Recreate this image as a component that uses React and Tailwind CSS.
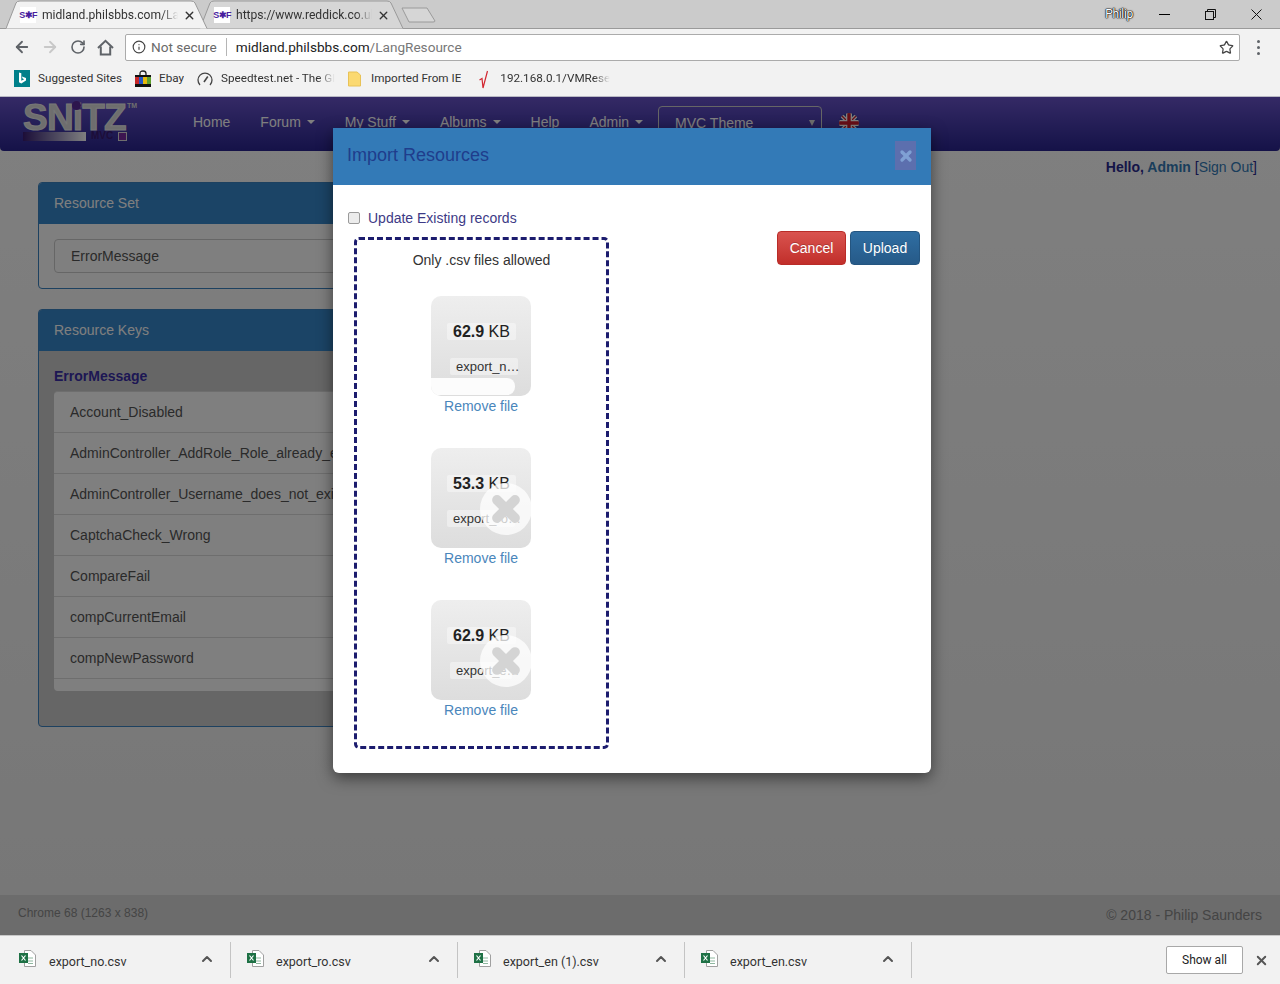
import React from 'react';
import { ArrowLeft, ArrowRight, RotateCw, Info, Star, ChevronUp, X } from 'lucide-react';

const chromeFont = "font-['Roboto',sans-serif]";
const pageFont = "font-['Liberation_Sans',Arial,sans-serif]";

const Favicon = () => (
  <span className="flex h-[16px] w-[16px] shrink-0 items-center justify-center bg-white text-[9px] font-bold leading-none tracking-[-0.6px] text-[#4a1f9e] font-['Liberation_Sans',sans-serif]">
    S✱F
  </span>
);

const TabShape = ({ fill, width }) => (
  <svg className="absolute left-0 top-0" width={width} height="29" viewBox={`0 0 ${width} 29`}>
    <path
      d={`M0 28.5 L10 3 Q11 1 14 1 L${width - 17} 1 Q${width - 14} 1 ${width - 13} 3 L${width - 1} 28.5`}
      fill={fill}
      stroke="#9a9a9a"
      strokeWidth="1"
    />
  </svg>
);

const Tab = ({ title, active, width, className }) => (
  <div className={`relative h-[29px] shrink-0 ${className}`} style={{ width }}>
    <TabShape fill={active ? '#f2f2f2' : '#d6d6d6'} width={width} />
    <div className="relative flex h-[29px] items-center pt-[1px] pl-[14px]">
      <Favicon />
      <span className="ml-[6px] w-[136px] overflow-hidden whitespace-nowrap text-[12.1px] text-[#333] [mask-image:linear-gradient(to_right,black_88%,transparent)]">
        {title}
      </span>
      <X size={13} strokeWidth={2.5} className="ml-[5px] text-[#333]" />
    </div>
  </div>
);

const HomeIcon = () => (
  <svg width="17" height="17" viewBox="0 0 17 17" fill="none" stroke="#5f6368" strokeWidth="2">
    <path d="M1 9 L8.5 1.8 L16 9" />
    <path d="M3.8 7.5 V15.5 H13.2 V7.5" />
  </svg>
);

const BingIcon = () => (
  <svg width="16" height="17" viewBox="0 0 16 17">
    <rect width="16" height="17" fill="#00808a" />
    <path d="M5 2.5 L7.3 3.3 V10.8 L10.2 9.2 L8.6 8.4 L7.9 6.6 L12 8 V10.4 L7.3 13.4 L5 12.2 Z" fill="#fff" />
  </svg>
);

const BagIcon = () => (
  <svg width="16" height="17" viewBox="0 0 16 17">
    <path d="M5 6 V3.5 Q5 1 8 1 Q11 1 11 3.5 V6" fill="none" stroke="#222" strokeWidth="1.3" />
    <rect y="5" width="16" height="2" fill="#111" />
    <rect y="7" width="4" height="8" fill="#c62828" />
    <rect x="4" y="7" width="4" height="8" fill="#2456c8" />
    <rect x="8" y="7" width="4" height="8" fill="#e5b90c" />
    <rect x="12" y="7" width="4" height="8" fill="#5fa02e" />
    <rect y="14" width="16" height="3" fill="#111" />
  </svg>
);

const GaugeIcon = () => (
  <svg width="16" height="16" viewBox="0 0 16 16" fill="none" stroke="#444" strokeWidth="1.3">
    <path d="M3 14 A7 7 0 1 1 13 14" />
    <path d="M7 11 L10.8 5.5" strokeWidth="1.6" />
  </svg>
);

const FolderIcon = () => (
  <svg width="13" height="16" viewBox="0 0 13 16">
    <path d="M0.5 1 H9 L12.5 4 V15 H0.5 Z" fill="#fbd971" stroke="#e8c257" />
  </svg>
);

const CheckMark = () => (
  <svg width="9" height="19" viewBox="0 0 9 19" fill="none" stroke="#d22630" strokeWidth="1.2">
    <path d="M0.5 10 L3 8.5 L4 18 L8.5 1" />
  </svg>
);

const Bookmark = ({ icon, label, iconLeft, textLeft, width, fade }) => (
  <div className="flex shrink-0 items-center" style={{ marginLeft: iconLeft }}>
    <span className="flex w-[16px] justify-center">{icon}</span>
    <span
      className={`overflow-hidden whitespace-nowrap text-[11.7px] text-[#333] ${fade ? '[mask-image:linear-gradient(to_right,black_85%,transparent)]' : ''}`}
      style={{ marginLeft: textLeft, width }}
    >
      {label}
    </span>
  </div>
);

const ChromeBar = () => (
  <div className={`shrink-0 ${chromeFont}`}>
    <div className="relative flex h-[29px] items-start bg-[#cbcbcb] border-b border-[#9a9a9a]">
      <div className="flex pl-[6px]">
        <Tab title="midland.philsbbs.com/LangResource" active width={202} className="z-10" />
        <Tab title="https://www.reddick.co.uk/" width={204} className="-ml-[8px]" />
        <svg className="-ml-[3px] mt-[7px]" width="36" height="16" viewBox="0 0 36 16" fill="#d6d6d6" stroke="#9a9a9a">
          <path d="M1 1 H26 L34 14 Q34 15 32 15 H8 Z" />
        </svg>
      </div>
      <div className="ml-auto flex items-center pt-[5px]">
        <span className="mr-[26px] text-[12px] tracking-[-0.3px] text-white [text-shadow:0_0_1px_#000,0_0_1px_#000,0_0_1px_#000,0_0_2px_#222]">Philip</span>
        <span className="mr-[35px] h-[1px] w-[11px] bg-black" />
        <svg className="mr-[35px]" width="11" height="11" viewBox="0 0 11 11" fill="none" stroke="#111">
          <rect x="0.5" y="2.5" width="8" height="8" fill="#cbcbcb" />
          <path d="M2.5 2.5 V0.5 H10.5 V8.5 H8.5" />
        </svg>
        <svg className="mr-[18px]" width="11" height="11" viewBox="0 0 11 11" stroke="#111">
          <path d="M0.5 0.5 L10.5 10.5 M10.5 0.5 L0.5 10.5" />
        </svg>
      </div>
    </div>

    <div className="flex h-[35px] items-center bg-[#f2f2f2] pt-[1px]">
      <ArrowLeft size={18} strokeWidth={2.4} className="ml-[13px] text-[#5f6368]" />
      <ArrowRight size={18} strokeWidth={2.4} className="ml-[10px] text-[#c8c8c8]" />
      <RotateCw size={16} strokeWidth={2.4} className="ml-[11px] text-[#5f6368]" />
      <span className="ml-[11px] flex"><HomeIcon /></span>
      <div className="ml-[11px] flex h-[27px] w-[1115px] items-center rounded-[2px] border border-[#ababab] bg-white">
        <Info size={14} strokeWidth={2} className="ml-[6px] text-[#444]" />
        <span className="ml-[5px] text-[13.6px] text-[#6a6a6a]">Not secure</span>
        <span className="ml-[9px] h-[18px] w-px bg-[#b5b5b5]" />
        <span className="ml-[9px] text-[13.6px] text-[#222]">midland.philsbbs.com<span className="text-[#777]">/LangResource</span></span>
        <Star size={15} strokeWidth={2} className="ml-auto mr-[5px] text-[#444]" />
      </div>
      <div className="ml-[17px] flex flex-col gap-[3px]">
        <span className="h-[3px] w-[3px] rounded-full bg-[#5f6368]" />
        <span className="h-[3px] w-[3px] rounded-full bg-[#5f6368]" />
        <span className="h-[3px] w-[3px] rounded-full bg-[#5f6368]" />
      </div>
    </div>

    <div className="flex h-[33px] items-center bg-[#f2f2f2] border-b border-[#b9b9c4] pb-[2px]">
      <Bookmark icon={<BingIcon />} label="Suggested Sites" iconLeft={14} textLeft={8} />
      <Bookmark icon={<BagIcon />} label="Ebay" iconLeft={13} textLeft={8} />
      <Bookmark icon={<GaugeIcon />} label="Speedtest.net - The Global Broadband" iconLeft={13} textLeft={8} width={114} fade />
      <Bookmark icon={<FolderIcon />} label="Imported From IE" iconLeft={11} textLeft={9} />
      <Bookmark icon={<CheckMark />} label="192.168.0.1/VMResetPage" iconLeft={14} textLeft={9} width={110} fade />
    </div>
  </div>
);

const UkFlag = () => (
  <svg width="20" height="20" viewBox="0 0 20 20" className="rounded-full">
    <rect width="20" height="20" fill="#2a3f9c" />
    <path d="M0 0 L20 20 M20 0 L0 20" stroke="#fff" strokeWidth="4" />
    <path d="M0 0 L20 20 M20 0 L0 20" stroke="#d01c2f" strokeWidth="1.3" />
    <path d="M10 0 V20 M0 10 H20" stroke="#fff" strokeWidth="6" />
    <path d="M10 0 V20 M0 10 H20" stroke="#d01c2f" strokeWidth="3.4" />
  </svg>
);

const Logo = () => (
  <div className={`relative flex h-[54px] w-[178px] shrink-0 flex-col pl-[23px] pt-[6px] ${pageFont}`}>
    <div className="relative flex h-[28px] items-center">
      <span className="text-[37px] font-bold leading-none tracking-[-0.8px] text-[#dddddd] [-webkit-text-stroke:1px_#eeeeee]">SNiTZ</span>
      <span className="mb-[22px] ml-[1px] text-[7px] font-bold text-[#ddd]">TM</span>
      <span className="absolute left-[49px] top-[-2px] h-[9px] w-[9px] rounded-full bg-[#5a2a9a]" />
    </div>
    <div className="flex h-[10px] w-[104px] items-center">
      <span className="h-[9px] w-[63px] bg-gradient-to-r from-[#3a1a70] to-[#ffffff]" />
      <span className="w-[32px] text-center text-[10px] font-bold leading-none text-[#3a1a70]">MVC</span>
      <span className="h-[9px] w-[9px] border border-[#ddd] bg-[#7a2aa0]" />
    </div>
  </div>
);

const Caret = () => <span className="ml-[6px] inline-block h-0 w-0 border-x-4 border-t-4 border-x-transparent border-t-current align-middle" />;

const NavItem = ({ label, caret }) => (
  <a className="flex items-center whitespace-nowrap px-[15px] text-[14px] text-white">
    {label}
    {caret && <Caret />}
  </a>
);

const Navbar = () => (
  <div className="flex h-[54px] shrink-0 rounded-b-[4px] bg-gradient-to-b from-[#6a54cc] to-[#2a2490]">
    <Logo />
    <div className="flex h-[54px] items-center pb-[4px]">
      <NavItem label="Home" />
      <NavItem label="Forum" caret />
      <NavItem label="My Stuff" caret />
      <NavItem label="Albums" caret />
      <NavItem label="Help" />
      <NavItem label="Admin" caret />
    </div>
    <div className="mt-[9px] flex h-[34px] w-[164px] items-center justify-between rounded-[4px] border border-[#ccc] pl-[16px] pr-[6px] text-[14px] text-white">
      MVC Theme
      <span className="h-0 w-0 border-x-[3.5px] border-t-[6px] border-x-transparent border-t-[#ddd]" />
    </div>
    <div className="ml-[17px] mt-[16px]"><UkFlag /></div>
  </div>
);

const resourceKeys = [
  'Account_Disabled',
  'AdminController_AddRole_Role_already_exists',
  'AdminController_Username_does_not_exist',
  'CaptchaCheck_Wrong',
  'CompareFail',
  'compCurrentEmail',
  'compNewPassword',
];

const PageContent = () => (
  <div className="relative flex min-h-0 flex-1 flex-col">
    <div className="flex items-start justify-between pl-[38px] pr-[23px]">
      <div className="w-[420px]">
        <div className="mt-[31px] overflow-hidden rounded-[4px] border border-[#3a82c0] bg-white">
          <div className="flex h-[41px] items-center bg-[#3788cc] px-[15px] text-[14px] text-white">Resource Set</div>
          <div className="px-[15px] py-[15px]">
            <div className="flex h-[34px] items-center rounded-[4px] border border-[#ccc] px-[16px] text-[14px] text-[#555]">ErrorMessage</div>
          </div>
        </div>
        <div className="mt-[20px] h-[418px] overflow-hidden rounded-[4px] border border-[#3a82c0] bg-[#cdcdcd]">
          <div className="flex h-[41px] items-center bg-[#3788cc] px-[15px] text-[14px] text-white">Resource Keys</div>
          <div className="px-[15px] pt-[15px]">
            <div className="h-[20px] text-[14px] font-bold leading-[20px] text-[#3a2fa8]">ErrorMessage</div>
            <div className="mt-[5px] h-[300px] overflow-hidden rounded-[4px] border-t border-[#ddd] bg-white">
              {resourceKeys.map((k) => (
                <div key={k} className="flex h-[41px] items-center whitespace-nowrap border-b border-[#ddd] px-[16px] text-[14px] text-[#555]">{k}</div>
              ))}
            </div>
          </div>
        </div>
      </div>
      <div className="mt-[6px] text-[14px] text-[#2a2a90]">
        <b>Hello, </b><b className="text-[#337ab7]">Admin</b> [<span className="text-[#337ab7]">Sign Out</span>]
      </div>
    </div>
  </div>
);

const Footer = () => (
  <div className="flex h-[40px] shrink-0 items-center justify-between bg-[#d8d8d8] pl-[18px] pr-[18px] text-[#8a8a8a]">
    <span className="mb-[4px] text-[12px]">Chrome 68 (1263 x 838)</span>
    <span className="text-[14px]">© 2018 - Philip Saunders</span>
  </div>
);

const previews = [
  { size: '62.9', name: 'export_n…', nameClass: 'pl-[6px] ml-[19px] w-[68px]', progress: true },
  { size: '53.3', name: 'export_ro…', nameClass: 'pl-[6px] ml-[16px] w-[68px]', failed: true },
  { size: '62.9', name: 'export_e…', nameClass: 'pl-[6px] ml-[19px] w-[62px]', failed: true },
];

const Preview = ({ size, name, nameClass, progress, failed }) => (
  <div className="flex flex-col items-center pr-[1px]">
    <div className="relative h-[100px] w-[100px] overflow-hidden rounded-[10px] bg-gradient-to-b from-[#eeeeee] to-[#dddddd]">
      <div className="ml-[16px] mt-[27px] flex h-[17px] w-[69px] items-center justify-center rounded-[2px] bg-white/40 text-[16px] text-[#222]">
        <b>{size}</b>&nbsp;KB
      </div>
      <div className={`mt-[18px] flex h-[17px] items-center whitespace-nowrap rounded-[2px] bg-white/40 text-[13px] text-[#333] ${nameClass}`}>{name}</div>
      {progress && <div className="mt-[3px] h-[17px] w-[84px] rounded-r-[8px] bg-white/90" />}
    </div>
    {failed && (
      <div className="absolute ml-[50px] mt-[35px] flex h-[52px] w-[52px] items-center justify-center rounded-full bg-white/75">
        <X size={36} strokeWidth={6.5} className="text-[#d4d4d4]" />
      </div>
    )}
    <a className="h-[20px] text-[14px] leading-[20px] text-[#4a86bb]">Remove file</a>
  </div>
);

const ImportModal = () => (
  <div className="absolute left-[333px] top-[31px] h-[645px] w-[598px] overflow-hidden rounded-b-[6px] bg-white shadow-[0_5px_15px_rgba(0,0,0,0.5)]">
    <div className="flex h-[57px] items-center justify-between bg-[#337ab7] pb-[2px] pl-[14px] pr-[15px]">
      <h4 className="text-[18px] text-[#1f3d8c]">Import Resources</h4>
      <button className="flex h-[29px] w-[21px] items-center justify-center bg-[#5c6fae]">
        <X size={16} strokeWidth={5} className="text-[#7fa0d4]" />
      </button>
    </div>
    <label className="ml-[15px] mt-[23px] flex h-[20px] items-center text-[14px] text-[#3d3a86]">
      <span className="h-[12px] w-[12px] rounded-[2px] border border-[#9a9a9a] bg-[#ececec]" />
      <span className="ml-[8px]">Update Existing records</span>
    </label>
    <div className="flex items-start justify-between pl-[21px] pr-[11px]">
      <div className="mt-[9px] h-[512px] w-[255px] rounded-[5px] border-[3px] border-dashed border-[#1c1c6e]">
        <div className="mt-[10px] h-[20px] text-center text-[14px] leading-[20px] text-[#333]">Only .csv files allowed</div>
        <div className="mt-[26px] flex flex-col gap-[32px]">
          {previews.map((p, i) => <Preview key={i} {...p} />)}
        </div>
      </div>
      <div className="mt-[3px] flex gap-[4px]">
        <button className="h-[34px] w-[69px] rounded-[4px] border border-[#b92c28] bg-gradient-to-b from-[#d9534f] to-[#c12e2a] text-[14px] text-white [text-shadow:0_-1px_0_rgba(0,0,0,0.2)]">Cancel</button>
        <button className="h-[34px] w-[70px] rounded-[4px] border border-[#245580] bg-gradient-to-b from-[#2f6ea3] to-[#265a88] text-[14px] text-white [text-shadow:0_-1px_0_rgba(0,0,0,0.2)]">Upload</button>
      </div>
    </div>
  </div>
);

const ExcelIcon = () => (
  <svg width="17" height="17" viewBox="0 0 17 17">
    <path d="M5.5 0.5 H12 L16.5 5 V16.5 H5.5 Z" fill="#fff" stroke="#a0a0a0" />
    <path d="M9 8 H14 M9 11 H14 M9 13.5 H14" stroke="#8fb8a0" />
    <rect y="3" width="9" height="10" fill="#1e7145" />
    <path d="M2.5 5.5 L6.5 10.5 M6.5 5.5 L2.5 10.5" stroke="#fff" strokeWidth="1.2" />
  </svg>
);

const downloads = ['export_no.csv', 'export_ro.csv', 'export_en (1).csv', 'export_en.csv'];

const DownloadBar = () => (
  <div className={`flex h-[49px] shrink-0 items-center border-t border-[#c8c8c8] bg-[#f2f2f2] ${chromeFont}`}>
    <div className="flex">
      {downloads.map((d, i) => (
        <div key={d} className={`flex h-[36px] items-center border-r border-[#c4c4c4] ${i === 0 ? 'w-[231px] pl-[19px]' : 'w-[227px] pl-[16px]'}`}>
          <span className="mb-[4px] flex"><ExcelIcon /></span>
          <span className={`mt-[5px] w-[148px] text-[12.5px] text-[#333] ${i === 0 ? 'ml-[13px]' : 'ml-[12px]'}`}>{d}</span>
          <ChevronUp size={16} strokeWidth={3} className="mb-[3px] ml-[2px] text-[#555]" />
        </div>
      ))}
    </div>
    <button className="mb-[1px] ml-auto h-[28px] w-[77px] rounded-[2px] border border-[#a8a8a8] bg-white text-[12px] font-normal text-[#222]">Show all</button>
    <X size={15} strokeWidth={3} className="ml-[11px] mr-[11px] text-[#555]" />
  </div>
);

export default function App() {
  return (
    <div className={`flex h-[984px] w-[1280px] flex-col overflow-hidden bg-white ${pageFont}`}>
      <ChromeBar />
      <div className="relative flex min-h-0 flex-1 flex-col bg-gradient-to-b from-[#ffffff] to-[#eeeeee]">
        <Navbar />
        <PageContent />
        <Footer />
        <div className="absolute inset-0 bg-black/50" />
        <ImportModal />
      </div>
      <DownloadBar />
    </div>
  );
}
